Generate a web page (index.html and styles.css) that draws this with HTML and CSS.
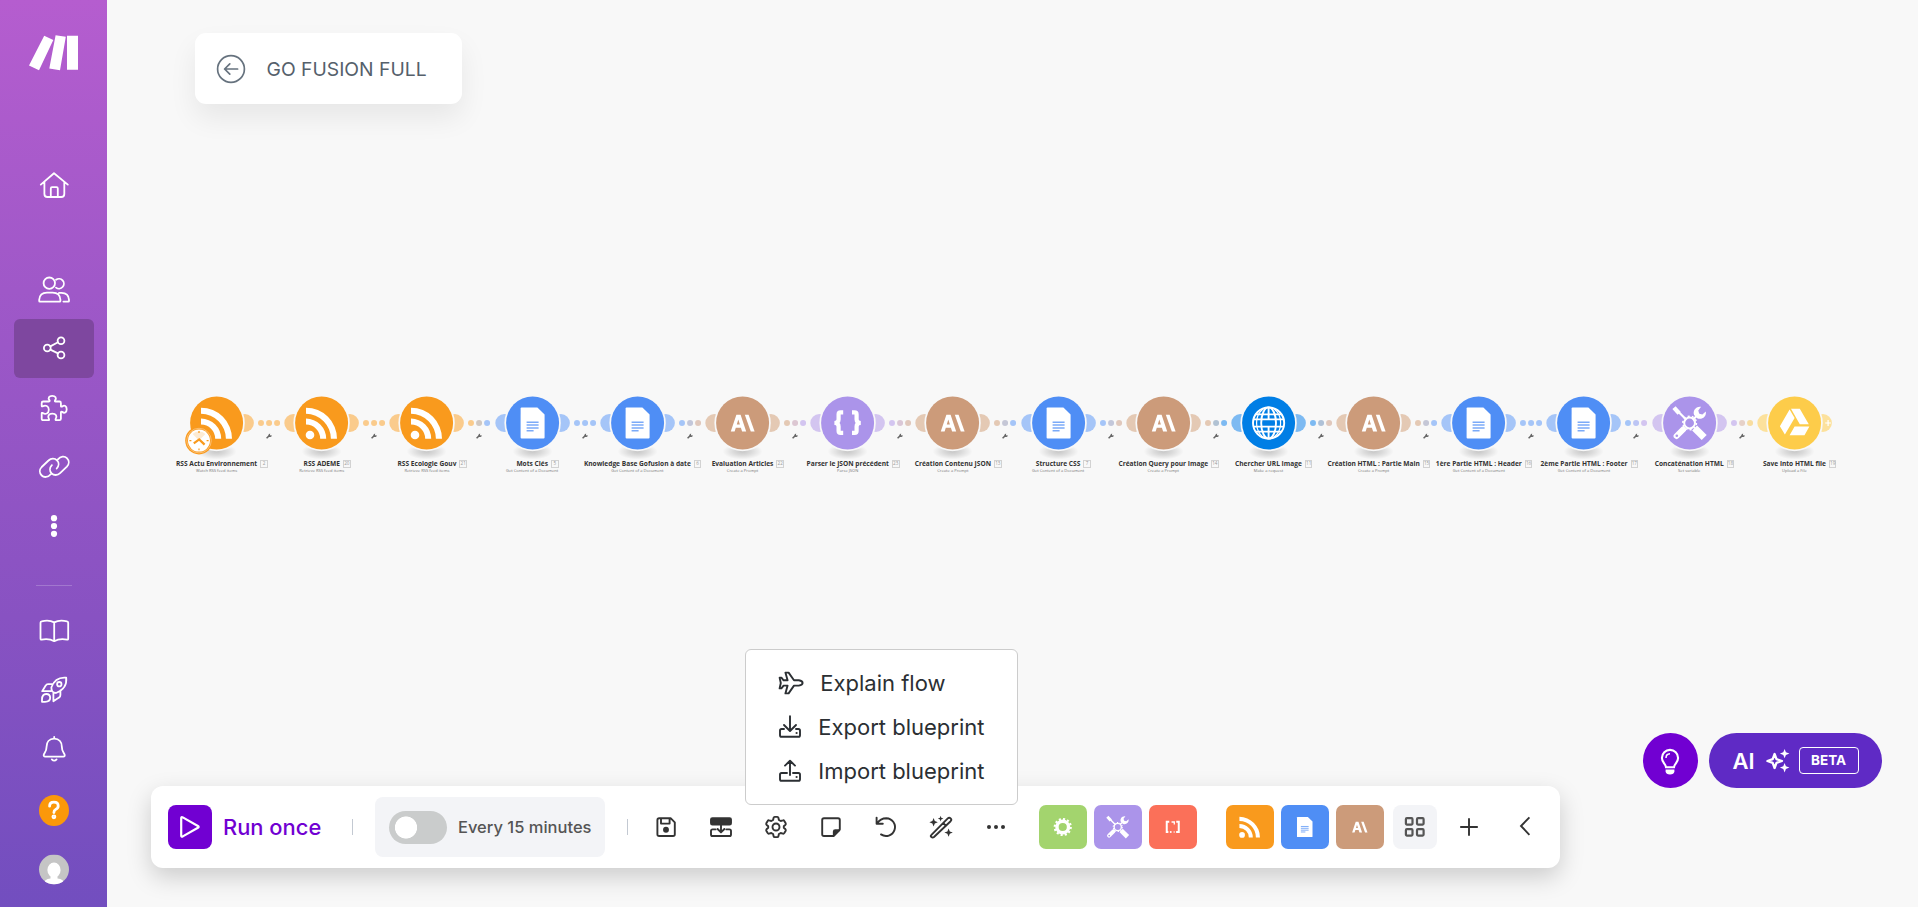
FILE: index.html
```html
<!DOCTYPE html>
<html lang="en">
<head>
<meta charset="utf-8">
<title>GO FUSION FULL</title>
<link rel="stylesheet" href="styles.css">
</head>
<body>
<svg class="sprite" aria-hidden="true">
  <defs>
    <radialGradient id="shade"><stop offset="0" stop-color="#000" stop-opacity=".2"/><stop offset=".45" stop-color="#000" stop-opacity=".12"/><stop offset="1" stop-color="#000" stop-opacity="0"/></radialGradient>
    <symbol id="lobe-left" overflow="visible"><circle class="lobe" cx="-28.3" cy="0" r="9"/></symbol>
    <symbol id="lobe-right" overflow="visible"><circle class="lobe" cx="28.3" cy="0" r="9"/></symbol>
    <symbol id="disc" overflow="visible"><ellipse cx="0" cy="28.5" rx="20" ry="8" fill="url(#shade)"/><circle cx="0" cy="0" r="28.2" class="gap"/><circle cx="0" cy="0" r="26.5" class="fill"/></symbol>
    <symbol id="link" overflow="visible"><circle class="dot-a" cx="44.4" cy="0" r="3"/><circle class="dot-b" cx="52.5" cy="0" r="3"/><circle class="dot-c" cx="60.5" cy="0" r="3"/><path d="M50 15.2 53 12.4" stroke="#666" stroke-width="1.5"/><path d="M51.9 12.9a2 2 0 0 1 1.7-2.4l-.3 1.2.7.8 1.2-.3a2 2 0 0 1-2.5 1.8z" fill="#666"/></symbol>
    <symbol id="g-rss" overflow="visible"><circle cx="-11.6" cy="12" r="4.3"/><path d="M-15.6-15.3A31 31 0 0 1 15.4 15.8H9.3A25 25 0 0 0-15.6-9.2zM-15.6-4.4A20.2 20.2 0 0 1 4.6 15.8H-1.4A14.2 14.2 0 0 0-15.6 1.6z"/></symbol>
    <symbol id="g-doc" overflow="visible"><path d="M-11-15.6H4.8L12-8.4V14.6q0 1-1 1H-11q-1 0-1-1V-14.6q0-1 1-1z"/><path class="lines" d="M-6-.8H6M-6 2H6M-6 4.9H6M-6 7.7H1"/></symbol>
    <symbol id="g-ai" overflow="visible"><path fill-rule="evenodd" d="M-6.2-8.3H-2L3.6 8.5H-.5L-1.7 4.8H-6.8L-8 8.5H-11.8zM-4.3-3.6-5.8 1.6H-2.7z"/><path d="M2.2-8.3H6L12 8.5H8.2z"/></symbol>
    <symbol id="g-json" overflow="visible"><path fill="none" stroke="#fff" stroke-width="4.2" d="M-4.4-10.6H-7Q-9-10.6-9-8.6V-3.4Q-9 0-13.2 0Q-9 0-9 3.4V7.9Q-9 9.9-7 9.9H-4.4M4.4-10.6H7Q9-10.6 9-8.6V-3.4Q9 0 13.2 0Q9 0 9 3.4V7.9Q9 9.9 7 9.9H4.4"/></symbol>
    <symbol id="g-globe" overflow="visible"><g fill="none" stroke="#fff" stroke-width="1.9"><circle cx="0" cy="0" r="15.6"/><ellipse cx="0" cy="0" rx="7.4" ry="15.6"/><ellipse cx="0" cy="0" rx="12" ry="15.6" stroke-width="1.2"/><path d="M-13-8.6H13M-13 8.6H13M-15.6-3.6H15.6M-15.6 3.6H15.6M0-15V-3M0 3V15"/></g></symbol>
    <symbol id="g-tools" overflow="visible"><g stroke="#fff" fill="none"><path stroke-width="2.2" d="M-13-13-3.5-3.5M9.5-9.5 4-4"/><path stroke-width="4.4" d="M-15.6-15.4-10.4-9.6"/><path stroke-width="6" stroke-linecap="round" d="M-13 13-6.5 6.5"/><path stroke-width="7" d="M5 5 14.6 14.6"/><circle cx="0" cy="0" r="5.4" stroke-width="2"/><circle cx="0" cy="0" r="6.8" stroke-width="1.6" stroke-dasharray="2 2.27"/></g><path d="M4.5-8C3-12 6-17 11.5-16.2L8.7-12.5 9.6-9.2 12.8-8.6 16.2-11.5C17.2-6.5 12.5-3 8-4.5z"/><circle class="hole" cx="-12.8" cy="12.8" r="1.3"/></symbol>
    <symbol id="g-drive" overflow="visible"><path d="M-5-13.5-14.7 3.2-9.7 11.4 0-5zM-3.6-14.3H5.2L14.2 1.2H5.2zM0 3.6H14.8L9.9 12.3H-5z"/></symbol>
    <symbol id="g-gear" overflow="visible"><circle cx="0" cy="0" r="5.8" fill="none" stroke="#fff" stroke-width="3.4"/><circle cx="0" cy="0" r="8" fill="none" stroke="#fff" stroke-width="2.2" stroke-dasharray="2.1 2.089"/></symbol>
    <symbol id="g-text" overflow="visible"><g fill="none" stroke="#fff" stroke-width="2"><path d="M-3.5-5.2H-6V5H-4.4M3.5-5.2H6V5H3.4"/></g><circle cx="-2" cy="5" r="1"/><circle cx="1.4" cy="5" r=".7"/><path d="M-1.2-5.8H2.2V-2.6H.9V-4.2H-1.2z"/></symbol>
  </defs>
</svg>

<div class="app">
  <nav class="sidebar">
    <svg class="logo" viewBox="0 0 50 36"><path d="M15.2.8 24.3 5 10 35.2 0 30.4zM26.6.2 36.8 1.8 31 35.2 20.3 33.4zM38 .8H49V34.7H38z"/></svg>
    <a class="nav-item nav-home"><svg viewBox="0 0 34 34"><path d="M3.8 16.6 17 5.2 30.8 16.6M7.4 14V26Q7.4 29 10.4 29H24.3Q27.3 29 27.3 26V14M13.8 29V20.4Q13.8 19.2 15 19.2H19.6Q20.8 19.2 20.8 20.4V29"/></svg></a>
    <a class="nav-item"><svg viewBox="0 0 34 34"><circle cx="12.3" cy="10.2" r="5.7"/><path d="M19 6.8A4.9 4.9 0 1 1 19 14.6M2.2 27.9V26.8Q2.7 19.6 10 19.6H15.6Q23 19.6 23.4 26.8V27.9Q23.4 28.6 22.7 28.6H2.9Q2.2 28.6 2.2 27.9zM22 19.9H24.5Q31.6 20 32 26.8V27.9Q32 28.6 31.3 28.6H26.4"/></svg></a>
    <a class="nav-item active"><svg viewBox="0 0 34 34"><circle cx="10.3" cy="16" r="3.4"/><circle cx="24" cy="8.7" r="3.4"/><circle cx="24" cy="23" r="3.4"/><path d="M13.3 14.4 21 10.3M13.3 17.6 21 21.4"/></svg></a>
    <a class="nav-item"><svg viewBox="0 0 34 34"><path d="M4.7 12q0-1.5 1.5-1.5H12q1 0 .6-1.2C10.5 7 12 4.8 15.2 4.8S20 7 18 9.4q-.5 1.1.6 1.1H22.5q1.4 0 1.4 1.4V15q0 1 1.2.6C27.5 13.5 29.7 15 29.7 18.2S27.5 22.8 25.1 20.8q-1.2-.4-1.2.6V27.7q0 1.5-1.5 1.5H19.4q-1.2 0-.8-1.1C20.5 25.3 19 22.6 15.3 22.6S10.3 25.3 12 28.1q.5 1.1-.7 1.1H6.2q-1.5 0-1.5-1.5V22.5q0-1 1-.6C8.5 24 11.8 22.5 11.8 18.7S8.5 13.7 5.8 15.3q-1.1.4-1.1-.6z"/></svg></a>
    <a class="nav-item"><svg viewBox="0 0 34 34"><path d="M13.7 24.2C11 27.5 7 27.8 4.7 25.5 2.2 23 2.3 19.5 4.7 17L11.5 10.5C14 8 17.8 8 20 10.3 22.3 12.6 22 16 19.7 18.5M20.9 9.4C23.6 6.1 27.6 5.8 29.9 8.1 32.4 10.6 32.3 14.1 29.9 16.6L23.1 23.1C20.6 25.6 16.8 25.6 14.6 23.3 12.3 21 12.6 17.6 14.9 15.1"/></svg></a>
    <a class="nav-item"><svg viewBox="0 0 34 34" class="solid"><circle cx="17" cy="9.2" r="3.1"/><circle cx="17" cy="17" r="3.1"/><circle cx="17" cy="24.8" r="3.1"/></svg></a>
    <hr class="nav-rule">
    <a class="nav-item"><svg viewBox="0 0 34 34"><path d="M17.2 8.4V27M17.2 8.4Q12 5.6 4.6 7.4Q3.5 7.6 3.5 8.7V24.6Q3.5 25.8 4.7 25.6Q12 24.2 17.2 27.2Q22.4 24.2 30 25.6Q31.2 25.8 31.2 24.6V8.7Q31.2 7.6 30 7.4Q22.4 5.6 17.2 8.4z"/></svg></a>
    <a class="nav-item"><svg viewBox="0 0 34 34"><path d="M14.4 14.2C17 7.4 22 4 29.2 4.7 30 12 26 17.4 19 20Q14 20 14.4 14.2zM15.2 11.2H11Q9.4 11.2 8.7 12.6L5.2 18.2H13.6M23.4 17.4V22Q23.4 23.8 22 24.6L16.4 28.2V20.4M5 28.8V26.6Q5 21 9.2 21 13.2 21 13.2 24.8 13.2 28.8 8 28.8z"/><circle cx="22.3" cy="11.2" r="2.2"/></svg></a>
    <a class="nav-item"><svg viewBox="0 0 34 34"><path d="M17.2 4.8V6.6M17.2 6.6C12 6.6 9.6 10.4 9.6 14.4 9.6 19.4 7.4 20.8 6.8 22.6 6.4 23.8 7 24.6 8.2 24.6H26.4C27.6 24.6 28 23.8 27.6 22.6 27 20.8 24.8 19.4 24.8 14.4 24.8 10.4 22.4 6.6 17.2 6.6zM14.8 27.4Q17.2 30 19.6 27.4"/></svg></a>
    <a class="nav-item nav-help"><span class="help"><svg viewBox="0 0 30 30"><path d="M10.6 11.2Q10.6 7.2 14.9 7.2T19.2 11Q19.2 13.2 16.6 14.4Q14.9 15.2 14.9 17.6"/><circle cx="14.9" cy="21.8" r="1"/></svg></span></a>
    <a class="nav-item"><svg class="avatar" viewBox="0 0 30 30"><clipPath id="av"><circle cx="15" cy="15" r="15"/></clipPath><g clip-path="url(#av)"><rect width="30" height="30" fill="#c5c5c5"/><ellipse cx="15" cy="15.4" rx="6.6" ry="7.4" fill="#fff"/><path d="M11.5 20H18.5V24Q25 24.6 25.5 30H4.5Q5 24.6 11.5 24z" fill="#fff"/></g></svg></a>
  </nav>

  <main class="canvas">
    <header class="title-card">
      <svg viewBox="0 0 30 30"><circle cx="15" cy="15" r="13.4"/><path d="M21.6 15H8.6M13.8 9.8 8.6 15 13.8 20.2"/></svg>
      <h1>GO FUSION FULL</h1>
    </header>

    <section class="flow">
      <div class="node rss to-rss"><svg viewBox="-52.6 -28 105.2 64"><use href="#lobe-right"/><use href="#disc"/><use href="#g-rss" class="glyph"/><use href="#link"/>
        <circle cx="-17.6" cy="17.6" r="13.8" fill="#f99a1d"/><circle cx="-17.6" cy="17.6" r="12.3" fill="none" stroke="#fcc888" stroke-width=".8"/><circle cx="-17.6" cy="17.6" r="11" fill="#fff"/><path d="M-17.6 17.6-24 11A9.5 9.5 0 0 1-11.2 11z" fill="#fdebd3"/><path d="M-22.8 20.4-17.4 16.4-12 21.6" fill="none" stroke="#f99a1d" stroke-width="2.2"/><path d="M-17.6 8V10M-17.6 25.4V27.2M-27.2 17.6H-25.2M-10 17.6H-8" stroke="#f99a1d" stroke-width="1.2"/></svg>
        <p class="name">RSS Actu Environnement<b>2</b></p><p class="kind">Watch RSS feed items</p></div>
      <div class="node rss to-rss"><svg viewBox="-52.6 -28 105.2 64"><use href="#lobe-left"/><use href="#lobe-right"/><use href="#disc"/><use href="#g-rss" class="glyph"/><use href="#link"/></svg><p class="name">RSS ADEME<b>20</b></p><p class="kind">Retrieve RSS feed items</p></div>
      <div class="node rss to-docs"><svg viewBox="-52.6 -28 105.2 64"><use href="#lobe-left"/><use href="#lobe-right"/><use href="#disc"/><use href="#g-rss" class="glyph"/><use href="#link"/></svg><p class="name">RSS Ecologie Gouv<b>21</b></p><p class="kind">Retrieve RSS feed items</p></div>
      <div class="node docs to-docs"><svg viewBox="-52.6 -28 105.2 64"><use href="#lobe-left"/><use href="#lobe-right"/><use href="#disc"/><use href="#g-doc" class="glyph"/><use href="#link"/></svg><p class="name">Mots Clés<b>5</b></p><p class="kind">Get Content of a Document</p></div>
      <div class="node docs to-claude"><svg viewBox="-52.6 -28 105.2 64"><use href="#lobe-left"/><use href="#lobe-right"/><use href="#disc"/><use href="#g-doc" class="glyph"/><use href="#link"/></svg><p class="name">Knowledge Base Gofusion à date<b>6</b></p><p class="kind">Get Content of a Document</p></div>
      <div class="node claude to-tools"><svg viewBox="-52.6 -28 105.2 64"><use href="#lobe-left"/><use href="#lobe-right"/><use href="#disc"/><use href="#g-ai" class="glyph"/><use href="#link"/></svg><p class="name">Evaluation Articles<b>22</b></p><p class="kind">Create a Prompt</p></div>
      <div class="node tools to-claude"><svg viewBox="-52.6 -28 105.2 64"><use href="#lobe-left"/><use href="#lobe-right"/><use href="#disc"/><use href="#g-json" class="glyph"/><use href="#link"/></svg><p class="name">Parser le JSON précédent<b>23</b></p><p class="kind">Parse JSON</p></div>
      <div class="node claude to-docs"><svg viewBox="-52.6 -28 105.2 64"><use href="#lobe-left"/><use href="#lobe-right"/><use href="#disc"/><use href="#g-ai" class="glyph"/><use href="#link"/></svg><p class="name">Création Contenu JSON<b>13</b></p><p class="kind">Create a Prompt</p></div>
      <div class="node docs to-claude"><svg viewBox="-52.6 -28 105.2 64"><use href="#lobe-left"/><use href="#lobe-right"/><use href="#disc"/><use href="#g-doc" class="glyph"/><use href="#link"/></svg><p class="name">Structure CSS<b>7</b></p><p class="kind">Get Content of a Document</p></div>
      <div class="node claude to-http"><svg viewBox="-52.6 -28 105.2 64"><use href="#lobe-left"/><use href="#lobe-right"/><use href="#disc"/><use href="#g-ai" class="glyph"/><use href="#link"/></svg><p class="name">Création Query pour Image<b>14</b></p><p class="kind">Create a Prompt</p></div>
      <div class="node http to-claude"><svg viewBox="-52.6 -28 105.2 64"><use href="#lobe-left"/><use href="#lobe-right"/><use href="#disc"/><use href="#g-globe" class="glyph"/><use href="#link"/></svg><p class="name">Chercher URL Image<b>11</b></p><p class="kind">Make a request</p></div>
      <div class="node claude to-docs"><svg viewBox="-52.6 -28 105.2 64"><use href="#lobe-left"/><use href="#lobe-right"/><use href="#disc"/><use href="#g-ai" class="glyph"/><use href="#link"/></svg><p class="name">Création HTML : Partie Main<b>15</b></p><p class="kind">Create a Prompt</p></div>
      <div class="node docs to-docs"><svg viewBox="-52.6 -28 105.2 64"><use href="#lobe-left"/><use href="#lobe-right"/><use href="#disc"/><use href="#g-doc" class="glyph"/><use href="#link"/></svg><p class="name">1ère Partie HTML : Header<b>16</b></p><p class="kind">Get Content of a Document</p></div>
      <div class="node docs to-tools"><svg viewBox="-52.6 -28 105.2 64"><use href="#lobe-left"/><use href="#lobe-right"/><use href="#disc"/><use href="#g-doc" class="glyph"/><use href="#link"/></svg><p class="name">2ème Partie HTML : Footer<b>17</b></p><p class="kind">Get Content of a Document</p></div>
      <div class="node tools to-drive"><svg viewBox="-52.6 -28 105.2 64"><use href="#lobe-left"/><use href="#lobe-right"/><use href="#disc"/><use href="#g-tools" class="glyph"/><use href="#link"/></svg><p class="name">Concaténation HTML<b>18</b></p><p class="kind">Set variable</p></div>
      <div class="node drive"><svg viewBox="-52.6 -28 105.2 64"><use href="#lobe-left"/><use href="#lobe-right"/><path d="M30.6 0H36.4M33.5-2.9V2.9" stroke="#fff" stroke-width="1.2"/><use href="#disc"/><use href="#g-drive" class="glyph"/></svg><p class="name">Save into HTML file<b>19</b></p><p class="kind">Upload a File</p></div>
    </section>

    <div class="assist">
      <button class="tip"><svg viewBox="0 0 26 30"><path d="M9 20.2C8.8 16.8 4.9 15.4 4.9 11A8.1 8.1 0 0 1 21.1 11C21.1 15.4 17.2 16.8 17 20.2z"/><path d="M9 11Q9 7 13 6.8" stroke-width="1.5"/><path d="M8.6 22.4H17.4V24.4Q17 27.2 13 27.4Q9 27.2 8.6 24.4z" fill="#fff" stroke="none"/></svg></button>
      <button class="ai"><span>AI</span><svg viewBox="0 0 24 24"><path d="M8.6 5 10.5 10.2 16 12 10.5 13.8 8.6 19 6.7 13.8 1.4 12 6.7 10.2z" fill="none" stroke="#fff" stroke-width="2.3" stroke-linejoin="round"/><path d="M18.6 0 19.9 3.3 23.4 4.6 19.9 5.9 18.6 9.2 17.3 5.9 13.9 4.6 17.3 3.3zM18.6 14 19.9 17.3 23.4 18.6 19.9 19.9 18.6 23.4 17.3 19.9 13.9 18.6 17.3 17.3z" fill="#fff"/></svg><em>BETA</em></button>
    </div>

    <footer class="toolbar">
      <button class="run"><span class="run-icon"><svg viewBox="0 0 22 24"><path d="M2.2 3.4V20.4Q2.2 22.2 3.8 21.4L18.9 12.8Q20.4 11.9 18.9 11L3.8 2.4Q2.2 1.6 2.2 3.4z"/></svg></span>Run once</button>
      <i class="divider"></i>
      <div class="schedule"><span class="toggle"></span>Every 15 minutes</div>
      <i class="divider second"></i>
      <div class="actions">
        <svg viewBox="0 0 24 24"><path d="M3.4 5V19.2Q3.4 21 5.2 21H19Q20.8 21 20.8 19.2V7.4L16.6 3.2H5.2Q3.4 3.2 3.4 5zM7 3.4V8.6H15.6V3.4"/><circle cx="12" cy="14.8" r="2" class="ink"/></svg>
        <svg viewBox="0 0 24 24"><rect x="2" y="3.2" width="20" height="6.4" rx="1.4" class="ink"/><path d="M12 10V17M8.6 14 12 17.4 15.4 14M6.6 14.4H3.6Q2 14.4 2 16V19.4Q2 21 3.6 21H20.4Q22 21 22 19.4V16Q22 14.4 20.4 14.4H17.4"/></svg>
        <svg viewBox="0 0 24 24"><circle cx="12" cy="12" r="3.5"/><path d="M9.6 2.8Q9.8 1.9 10.7 1.9H13.3Q14.2 1.9 14.4 2.8L14.9 5 16.7 6 18.9 5.4Q19.8 5.1 20.3 5.9L21.7 8.3Q22.1 9.1 21.5 9.7L19.8 11.3V12.7L21.5 14.3Q22.1 14.9 21.7 15.7L20.3 18.1Q19.8 18.9 18.9 18.6L16.7 18 14.9 19 14.4 21.2Q14.2 22.1 13.3 22.1H10.7Q9.8 22.1 9.6 21.2L9.1 19 7.3 18 5.1 18.6Q4.2 18.9 3.7 18.1L2.3 15.7Q1.9 14.9 2.5 14.3L4.2 12.7V11.3L2.5 9.7Q1.9 9.1 2.3 8.3L3.7 5.9Q4.2 5.1 5.1 5.4L7.3 6 9.1 5z"/></svg>
        <svg viewBox="0 0 24 24"><path d="M5 3.2H19Q20.8 3.2 20.8 5V14.6L14.6 21H5Q3.2 21 3.2 19.2V5Q3.2 3.2 5 3.2z"/><path class="ink" d="M14.8 20.4V16.6Q14.8 15.2 16.2 15.2H20.2z"/></svg>
        <svg viewBox="0 0 24 24"><path d="M2.6 2.6V8.8H8.8M3 8.6C5 5.4 8.2 3.2 12.4 3.2A8.9 8.9 0 1 1 7 19.4"/></svg>
        <svg viewBox="0 0 24 24"><path d="M2.2 20.2 18.8 3.4Q20.2 2 21.6 3.4T21.6 6.2L5 22Q3.6 23 2.4 22T2.2 20.2zM14.2 8 17 10.8"/><path class="ink" stroke="none" d="M4.6 3 5.8 6 8.8 7.2 5.8 8.4 4.6 11.4 3.4 8.4.4 7.2 3.4 6zM11.6.8 12.3 2.8 14.4 3.6 12.3 4.4 11.6 6.4 10.9 4.4 8.9 3.6 10.9 2.8zM19.6 13.4 20.8 16.4 23.8 17.6 20.8 18.8 19.6 21.8 18.4 18.8 15.4 17.6 18.4 16.4z"/></svg>
        <svg viewBox="0 0 24 24" class="ink"><circle cx="5" cy="12" r="2"/><circle cx="12" cy="12" r="2"/><circle cx="19" cy="12" r="2"/></svg>
      </div>
      <div class="tiles">
        <span class="tile flowctl"><svg viewBox="-23.5 -22 47 44"><use href="#g-gear" class="glyph"/></svg></span>
        <span class="tile tools"><svg viewBox="-35.5 -33 71 66"><use href="#g-tools" class="glyph"/></svg></span>
        <span class="tile parser"><svg viewBox="-23.5 -22 47 44"><use href="#g-text" class="glyph"/></svg></span>
      </div>
      <div class="tiles favs">
        <span class="tile rss"><svg viewBox="-35.5 -33.2 71 66.4"><use href="#g-rss" class="glyph"/></svg></span>
        <span class="tile docs"><svg viewBox="-36 -34 72 68"><use href="#g-doc" class="glyph"/></svg></span>
        <span class="tile claude"><svg viewBox="-36 -34 72 68"><use href="#g-ai" class="glyph"/></svg></span>
        <span class="apps"><svg viewBox="0 0 22 22"><rect x="1.9" y="2.2" width="6.6" height="6.4" rx="1"/><rect x="13" y="2.2" width="6.6" height="6.4" rx="1"/><rect x="1.9" y="13.2" width="6.6" height="6.4" rx="1"/><rect x="13" y="13.2" width="6.6" height="6.4" rx="1"/></svg></span>
      </div>
      <svg class="plus" viewBox="0 0 20 20"><path d="M10 1.2V18.8M1.2 10H18.8"/></svg>
      <svg class="collapse" viewBox="0 0 12 20"><path d="M10.4 1.4 2 10 10.4 18.8"/></svg>

      <ul class="menu">
        <li><svg class="plane" viewBox="0 0 26 24"><path d="M1.6 6.6H3.4L5.6 9.3H9.6L7.4 1.6H10.6L16 9.3H20.8Q24.6 10 24.6 11.9T20.8 14.6H16L10.6 22.4H7.4L9.6 14.6H5.6L3.4 17.4H1.6L2.8 12z"/></svg>Explain flow</li>
        <li><svg viewBox="0 0 24 24"><path d="M12 1.2V15M6 10 12 16 18 10M6 14H3.6Q2 14 2 15.6V20.2Q2 21.8 3.6 21.8H20.4Q22 21.8 22 20.2V15.6Q22 14 20.4 14H18"/><circle cx="18.6" cy="18" r="1.1" class="ink" stroke="none"/></svg>Export blueprint</li>
        <li><svg viewBox="0 0 24 24"><path d="M12 16V2M7 6.6 12 1.8 17 6.6M9 14H3.6Q2 14 2 15.6V20.2Q2 21.8 3.6 21.8H20.4Q22 21.8 22 20.2V15.6Q22 14 20.4 14H15"/><circle cx="18.6" cy="18" r="1.1" class="ink" stroke="none"/></svg>Import blueprint</li>
      </ul>
    </footer>
  </main>
</div>
</body>
</html>
```
FILE: styles.css
```css
* { box-sizing: border-box; }
body { margin: 0; font-family: Inter, "Liberation Sans", sans-serif; background: #f8f8f8; }
button { font: inherit; border: 0; padding: 0; background: none; }
svg { display: block; flex: none; }
.sprite { position: absolute; width: 0; height: 0; }
.app { display: flex; width: 1918px; height: 907px; overflow: hidden; }

/* Sidebar */
.sidebar { width: 107px; flex: none; display: flex; flex-direction: column; align-items: center; background: linear-gradient(180deg, #b55dcf 0%, #9f58c8 32%, #8852c2 68%, #724ebf 100%); }
.logo { width: 50px; height: 36px; margin: 35px 0 84px; fill: #fff; }
.nav-item { width: 80px; height: 59px; flex: none; margin-left: 1px; display: flex; align-items: center; justify-content: center; border-radius: 6px; }
.nav-item svg { width: 34px; height: 34px; fill: none; stroke: #fff; stroke-width: 1.8; stroke-linecap: round; stroke-linejoin: round; }
.nav-item svg.solid { fill: #fff; stroke: none; }
.nav-home { margin-bottom: 46px; }
.active { background: #7e479f; }
.nav-rule { width: 36px; height: 1px; border: 0; flex: none; margin: 30px 0 15.5px 1px; background: #a277cf; }
.nav-help { margin-top: 2px; }
.nav-item .help { width: 30px; height: 31px; border-radius: 50%; background: #fb980a; }
.nav-item .help svg { width: 30px; height: 30px; stroke-width: 2.8; }
.nav-item svg.avatar { width: 30px; height: 31px; stroke: none; }

/* Canvas */
.canvas { position: relative; flex: 1; display: flex; flex-direction: column; align-items: flex-start; padding: 33px 0 39px 44px; }
.title-card { width: 267px; height: 71px; margin-left: 44px; padding-left: 21px; display: flex; align-items: center; gap: 20.5px; background: #fff; border-radius: 11px; box-shadow: 0 14px 28px rgba(0, 0, 0, .07); }
.title-card svg { width: 30px; height: 30px; fill: none; stroke: #66727e; stroke-width: 1.7; stroke-linecap: round; stroke-linejoin: round; }
.title-card h1 { margin: 0; font-size: 19.3px; font-weight: 400; color: #55606b; white-space: nowrap; }

/* Scenario modules */
.flow { display: flex; margin: 291.4px 0 0 13px; }
.node { width: 105.2px; display: flex; flex-direction: column; align-items: center; }
.node > svg { width: 105.2px; height: 64px; overflow: visible; }
.node p { margin: 0; white-space: nowrap; font-family: "Open Sans", "Noto Sans", sans-serif; }
.name { position: relative; font-size: 6.6px; line-height: 9px; font-weight: 700; color: #333; }
.name b { position: absolute; left: 100%; top: 1px; width: 7.6px; height: 7.6px; margin-left: 3px; border: 1px solid #d2d2d2; font-size: 4.6px; line-height: 5.6px; font-weight: 400; text-align: center; color: #999; }
.kind { font-size: 4.1px; line-height: 6px; color: #777; }
.rss { --main: #f99a1d; --soft: #facb8c; }
.docs { --main: #4f8ef5; --soft: #a5c5f8; }
.claude { --main: #cc9b7a; --soft: #e4c9b4; }
.tools { --main: #ab94ea; --soft: #d3c5f0; }
.http { --main: #007ee5; --soft: #7dbaf2; }
.drive { --main: #fdcc4a; --soft: #fce19c; }
.flowctl { --main: #a3d46e; }
.parser { --main: #fb7059; }
.to-rss { --next: #facb8c; }
.to-docs { --next: #a5c5f8; }
.to-claude { --next: #e0c8bc; }
.to-tools { --next: #d3c5f0; }
.to-http { --next: #7dbaf2; }
.to-drive { --next: #f8dda0; }
.lobe, .dot-a { fill: var(--soft); }
.dot-b { fill: color-mix(in srgb, var(--soft), var(--next)); }
.dot-c { fill: var(--next); }
.gap { fill: #f8f8f8; }
.fill, .hole { fill: var(--main); }
.glyph { fill: #fff; }
.lines { fill: none; stroke: var(--main); stroke-width: 1.5; opacity: .75; }

/* Floating assistant buttons */
.assist { position: absolute; right: 36px; top: 733px; display: flex; gap: 11px; }
.assist button { height: 55px; display: flex; align-items: center; justify-content: center; color: #fff; }
.tip { width: 55px; border-radius: 50%; }
.assist .tip { background: #7100d2; }
.tip svg { width: 26px; height: 30px; margin-top: 2px; margin-right: 1px; fill: none; stroke: #fff; stroke-width: 2.1; }
.assist .ai { width: 173px; border-radius: 28px; background: #5f2ac5; font-size: 22px; font-weight: 600; }
.ai svg { width: 24px; height: 24px; margin: 0 9px 0 11px; }
.ai em { width: 60px; height: 27px; border: 1px solid #fff; border-radius: 4px; font-style: normal; font-size: 13.5px; line-height: 25px; font-weight: 700; }

/* Toolbar */
.toolbar { position: relative; width: 1409px; height: 82px; margin-top: auto; padding-left: 17px; display: flex; align-items: center; background: #fff; border-radius: 12px; box-shadow: 0 9px 24px rgba(0, 0, 0, .18); }
.run { display: flex; align-items: center; gap: 11px; width: 184px; font-size: 21.9px; font-weight: 500; color: #7100d2; white-space: nowrap; }
.run-icon { width: 44px; height: 44px; border-radius: 8px; background: #7100d2; display: flex; align-items: center; justify-content: center; }
.run-icon svg { width: 22px; height: 24px; fill: none; stroke: #fff; stroke-width: 2.2; }
.divider { width: 1px; height: 16px; background: #c3c9d2; }
.schedule { width: 230px; height: 60px; margin-left: 22px; padding-left: 14px; display: flex; align-items: center; gap: 11px; border-radius: 8px; background: #f3f4f7; color: #555; font-size: 16.5px; font-weight: 500; white-space: nowrap; }
.toggle { width: 58px; height: 33px; flex: none; border-radius: 17px; background: radial-gradient(circle at 17px 50%, #fff 10.7px, #cacccc 11.4px); }
.second { margin-left: 22px; }
.actions { display: flex; gap: 31px; margin-left: 26px; }
.actions svg, .menu svg { width: 24px; height: 24px; fill: none; stroke: #333; stroke-width: 1.9; stroke-linecap: round; stroke-linejoin: round; }
.actions .ink, .menu .ink { fill: #333; }
.actions svg.ink { stroke: none; }
.tiles { display: flex; gap: 7.5px; margin-left: 31.3px; }
.favs { margin-left: 29.5px; }
.tile { width: 47.5px; height: 44px; border-radius: 7px; background: var(--main); }
.tile svg { width: 47.5px; height: 44px; }
.apps { width: 44px; height: 44px; margin-left: 1.5px; border-radius: 8px; background: #f3f4f7; display: flex; align-items: center; justify-content: center; }
.apps svg { width: 22px; height: 22px; fill: none; stroke: #555; stroke-width: 2.2; }
.plus { width: 20px; height: 20px; margin-left: 22.5px; fill: none; stroke: #333; stroke-width: 1.9; }
.collapse { width: 12px; height: 20px; margin: 0 0 2px 39.5px; fill: none; stroke: #333; stroke-width: 1.9; }
.menu { position: absolute; left: 594px; bottom: 63px; width: 273px; height: 156px; margin: 0; padding: 11px 0 0 32px; list-style: none; background: #fff; border: 1px solid #ccc; border-radius: 6px; }
.menu li { height: 44px; display: flex; align-items: center; gap: 16.3px; font-size: 22px; color: #2b2f33; white-space: nowrap; }
.menu .plane { width: 26px; }
.menu svg { stroke: #2b2f33; }
```
